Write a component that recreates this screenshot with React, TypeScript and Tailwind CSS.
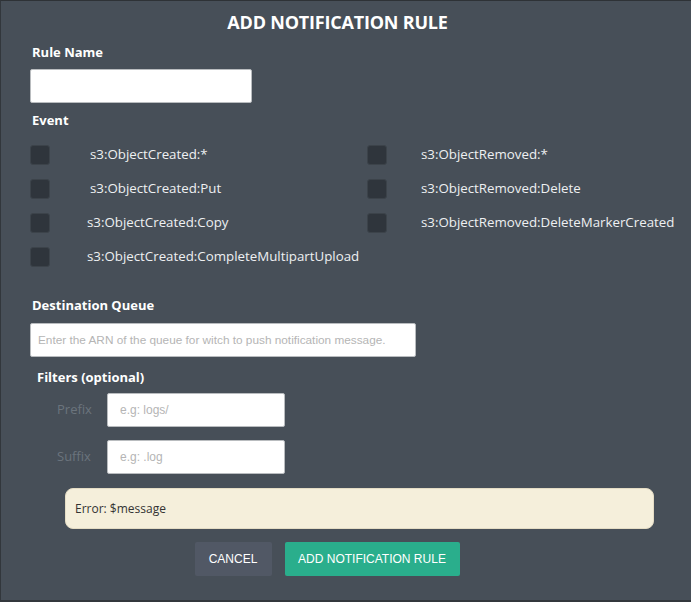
import React from "react";

const leftEvents = [
  { label: "s3:ObjectCreated:*", offset: "ml-[40px]" },
  { label: "s3:ObjectCreated:Put", offset: "ml-[40px]" },
  { label: "s3:ObjectCreated:Copy", offset: "ml-[37px]" },
  { label: "s3:ObjectCreated:CompleteMultipartUpload", offset: "ml-[37px]" },
];

const rightEvents = [
  "s3:ObjectRemoved:*",
  "s3:ObjectRemoved:Delete",
  "s3:ObjectRemoved:DeleteMarkerCreated",
];

function Box() {
  return <span className="w-[20px] h-[20px] shrink-0 rounded-[3px] bg-[#2f353c] border border-[#3c434a]" />;
}

export default function App() {
  return (
    <div className="w-[691px] h-[602px] bg-[#474f58] border-t border-t-[#2e3236] border-l border-l-[#32373c] border-b-2 border-b-[#32373c] font-['Open_Sans',sans-serif] text-white">
      <h1 className="pt-[9px] pr-[17px] text-center text-[18px] leading-[24px] font-bold tracking-[-0.2px]">
        ADD NOTIFICATION RULE
      </h1>

      <div className="pl-[29px]">
        <label className="block mt-[9px] ml-[2px] text-[13px] leading-[18px] font-bold">Rule Name</label>
        <input
          type="text"
          className="block mt-[8px] w-[222px] h-[34px] bg-white rounded-[2px] border border-[#b9bcbf]"
        />

        <label className="block mt-[8px] ml-[2px] text-[13px] leading-[18px] font-bold">Event</label>

        <div className="mt-[16px] grid grid-cols-[337px_1fr]">
          <div className="flex flex-col gap-[14px]">
            {leftEvents.map((e) => (
              <div key={e.label} className="flex items-center h-[20px]">
                <Box />
                <span className={`${e.offset} text-[13.3px] text-[#eef0f2]`}>{e.label}</span>
              </div>
            ))}
          </div>
          <div className="flex flex-col gap-[14px]">
            {rightEvents.map((e) => (
              <div key={e} className="flex items-center h-[20px]">
                <Box />
                <span className="ml-[34px] text-[13.3px] text-[#eef0f2]">{e}</span>
              </div>
            ))}
          </div>
        </div>

        <label className="block mt-[29px] ml-[2px] text-[13px] leading-[18px] font-bold">Destination Queue</label>
        <input
          type="text"
          placeholder="Enter the ARN of the queue for witch to push notification message."
          className="block mt-[9px] w-[386px] h-[34px] px-[7px] bg-white rounded-[2px] border border-[#b9bcbf] font-['Liberation_Sans',sans-serif] text-[11.8px] placeholder:text-[#b5b5b5]"
        />

        <label className="block mt-[11px] ml-[7px] text-[13px] leading-[18px] font-bold">Filters (optional)</label>

        <div className="mt-[7px] flex flex-col gap-[13px]">
          {[
            ["Prefix", "e.g: logs/"],
            ["Suffix", "e.g: .log"],
          ].map(([name, ph]) => (
            <div key={name} className="flex items-center">
              <span className="w-[77px] pl-[27px] text-[13px] text-[#6b747d]">{name}</span>
              <input
                type="text"
                placeholder={ph}
                className="w-[178px] h-[34px] px-[12px] bg-white rounded-[2px] border border-[#b9bcbf] font-['Liberation_Sans',sans-serif] text-[12px] placeholder:text-[#b5b5b5]"
              />
            </div>
          ))}
        </div>
      </div>

      <div className="mt-[14px] mr-[37px] ml-[64px] h-[41px] flex items-center px-[9px] rounded-[8px] bg-[#f5efdb] border border-[#e4dcc4] text-[12px] text-[#333]">
        Error: $message
      </div>

      <div className="mt-[13px] flex justify-center gap-[13px] pr-[38px] font-['Liberation_Sans',sans-serif] text-[12px]">
        <button className="w-[77px] h-[34px] rounded-[2px] bg-[#515865] text-white">CANCEL</button>
        <button className="w-[175px] h-[34px] rounded-[2px] bg-[#2aae8c] text-white">ADD NOTIFICATION RULE</button>
      </div>
    </div>
  );
}
